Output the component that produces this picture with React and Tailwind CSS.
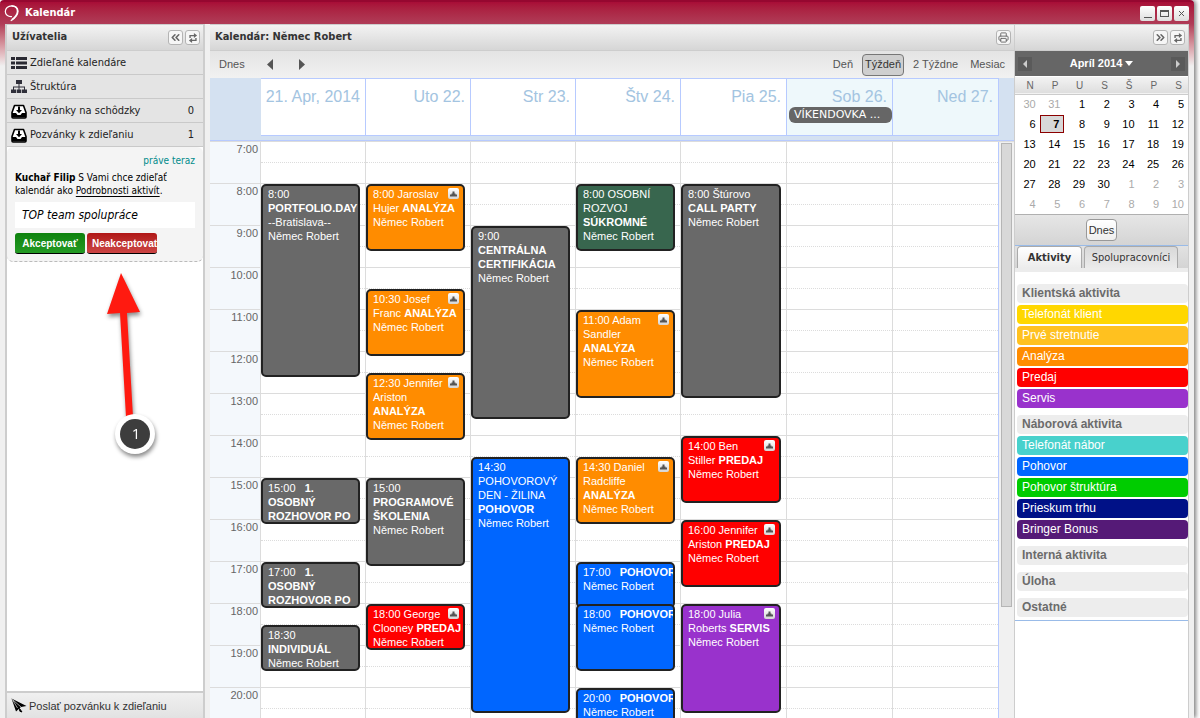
import { ChevronsLeft, ChevronsRight, Printer } from 'lucide-react'

const ARIAL = "font-['Liberation_Sans',Arial,sans-serif]"
const TAHOMA = "font-['DejaVu_Sans_Condensed',Tahoma,sans-serif]"
const DAY_COLUMNS = 'grid-cols-[105fr_105fr_105fr_105fr_106fr_106fr_106fr]'
const FIRST_HOUR = 7
const HOURS = Array.from({ length: 14 }, (_, i) => FIRST_HOUR + i)

const COLORS = {
  gray: 'bg-[#696969]',
  orange: 'bg-[#ff8c00]',
  green: 'bg-[#38664e]',
  blue: 'bg-[#0066ff]',
  red: 'bg-[#ff0000]',
  purple: 'bg-[#9932cc]',
}

// text after * is bold
const DAYS = [
  {
    label: '21. Apr, 2014',
    events: [
      { start: 8, hours: 4.5, color: 'gray', lines: ['8:00', '*PORTFOLIO.DAY', '--Bratislava--', 'Němec Robert'] },
      { start: 15, hours: 1, color: 'gray', lines: ['15:00 \u00a0 *1.', '*OSOBNÝ', '*ROZHOVOR PO'] },
      { start: 17, hours: 1, color: 'gray', lines: ['17:00 \u00a0 *1.', '*OSOBNÝ', '*ROZHOVOR PO'] },
      { start: 18.5, hours: 1, color: 'gray', lines: ['18:30', '*INDIVIDUÁL', 'Němec Robert'] },
    ],
  },
  {
    label: 'Uto 22.',
    events: [
      { start: 8, hours: 1.5, color: 'orange', shared: true, lines: ['8:00 Jaroslav', 'Hujer *ANALÝZA', 'Němec Robert'] },
      { start: 10.5, hours: 1.5, color: 'orange', shared: true, lines: ['10:30 Josef', 'Franc *ANALÝZA', 'Němec Robert'] },
      { start: 12.5, hours: 1.5, color: 'orange', shared: true, lines: ['12:30 Jennifer', 'Ariston', '*ANALÝZA', 'Němec Robert'] },
      { start: 15, hours: 2, color: 'gray', lines: ['15:00', '*PROGRAMOVÉ', '*ŠKOLENIA', 'Němec Robert'] },
      { start: 18, hours: 1, color: 'red', shared: true, lines: ['18:00 George', 'Clooney *PREDAJ', 'Němec Robert'] },
    ],
  },
  {
    label: 'Str 23.',
    events: [
      { start: 9, hours: 4.5, color: 'gray', lines: ['9:00', '*CENTRÁLNA', '*CERTIFIKÁCIA', 'Němec Robert'] },
      { start: 14.5, hours: 6, color: 'blue', lines: ['14:30', 'POHOVOROVÝ', 'DEN - ŽILINA', '*POHOVOR', 'Němec Robert'] },
    ],
  },
  {
    label: 'Štv 24.',
    events: [
      { start: 8, hours: 1.5, color: 'green', lines: ['8:00 OSOBNÍ', 'ROZVOJ', '*SÚKROMNÉ', 'Němec Robert'] },
      { start: 11, hours: 2, color: 'orange', shared: true, lines: ['11:00 Adam', 'Sandler', '*ANALÝZA', 'Němec Robert'] },
      { start: 14.5, hours: 1.5, color: 'orange', shared: true, lines: ['14:30 Daniel', 'Radcliffe', '*ANALÝZA', 'Němec Robert'] },
      { start: 17, hours: 1, color: 'blue', lines: ['17:00 \u00a0 *POHOVOR', 'Němec Robert'] },
      { start: 18, hours: 1.5, color: 'blue', lines: ['18:00 \u00a0 *POHOVOR', 'Němec Robert'] },
      { start: 20, hours: 1, color: 'blue', lines: ['20:00 \u00a0 *POHOVOR', 'Němec Robert'] },
    ],
  },
  {
    label: 'Pia 25.',
    events: [
      { start: 8, hours: 5, color: 'gray', lines: ['8:00 Štúrovo', '*CALL PARTY', 'Němec Robert'] },
      { start: 14, hours: 1.5, color: 'red', shared: true, lines: ['14:00 Ben', 'Stiller *PREDAJ', 'Němec Robert'] },
      { start: 16, hours: 1.5, color: 'red', shared: true, lines: ['16:00 Jennifer', 'Ariston *PREDAJ', 'Němec Robert'] },
      { start: 18, hours: 2.5, color: 'purple', shared: true, lines: ['18:00 Julia', 'Roberts *SERVIS', 'Němec Robert'] },
    ],
  },
  { label: 'Sob 26.', weekend: true, allDay: 'VÍKENDOVKA ...', events: [] },
  { label: 'Ned 27.', weekend: true, events: [] },
]

const WEEKS = [
  [30, 31, 1, 2, 3, 4, 5],
  [6, 7, 8, 9, 10, 11, 12],
  [13, 14, 15, 16, 17, 18, 19],
  [20, 21, 22, 23, 24, 25, 26],
  [27, 28, 29, 30, 1, 2, 3],
  [4, 5, 6, 7, 8, 9, 10],
]

const ACTIVITIES = [
  {
    name: 'Klientská aktivita',
    items: [
      ['Telefonát klient', 'bg-[#ffd700]'],
      ['Prvé stretnutie', 'bg-[#ffc11f]'],
      ['Analýza', 'bg-[#ff8c00]'],
      ['Predaj', 'bg-[#ff0000]'],
      ['Servis', 'bg-[#9932cc]'],
    ],
  },
  {
    name: 'Náborová aktivita',
    items: [
      ['Telefonát nábor', 'bg-[#48d1cc]'],
      ['Pohovor', 'bg-[#0066ff]'],
      ['Pohovor štruktúra', 'bg-[#00cc00]'],
      ['Prieskum trhu', 'bg-[#001187]'],
      ['Bringer Bonus', 'bg-[#551a77]'],
    ],
  },
  { name: 'Interná aktivita', items: [] },
  { name: 'Úloha', items: [] },
  { name: 'Ostatné', items: [] },
]

function LogoIcon() {
  return (
    <svg width="16" height="18" viewBox="0 0 16 18" fill="none" stroke="#fff" strokeLinecap="round">
      <path d="M7.5 12.6C3.8 12.8 1.3 10.6 1.3 7.6C1.3 4.3 4 1.8 7.8 1.8C11.5 1.8 14 4 14 7.2C14 11 10.8 14.2 7.2 16.6" strokeWidth="1.2" />
      <path d="M8 1.9C11.6 2 13.6 4.2 13.5 7.2C13.4 10.2 11 13.2 8.3 15.4" strokeWidth="1.5" />
    </svg>
  )
}

function ListIcon() {
  return (
    <svg width="16" height="14" viewBox="0 0 16 14" fill="#2a2a33">
      <path d="M0 1h4v3H0zM5 1h11v3H5zM0 5.5h4v3H0zM5 5.5h11v3H5zM0 10h4v3H0zM5 10h11v3H5z" />
    </svg>
  )
}

function TreeIcon() {
  return (
    <svg width="16" height="14" viewBox="0 0 16 14" fill="#2f2f3a">
      <path d="M5 0h6v4H5zM7.5 4h1v3h-1zM2 6.5h12v1H2zM2 7h1v3H2zM7.5 7h1v3h-1zM13 7h1v3h-1zM0 9.5h5V13H0zM5.7 9.5h4.6V13H5.7zM11 9.5h5V13h-5z" />
    </svg>
  )
}

function InboxIcon() {
  return (
    <svg width="16" height="15" viewBox="0 0 16 15">
      <path d="M3.5 1.5h9L15 8.5V13a1 1 0 0 1-1 1H2a1 1 0 0 1-1-1V8.5z" fill="#fff" stroke="#000" strokeWidth="1.6" strokeLinejoin="round" />
      <path d="M1 9h4l1.5 2h3L11 9h4v4.5H1z" fill="#000" />
      <path d="M7 2.5h2V6h2L8 9.2 5 6h2z" fill="#000" />
    </svg>
  )
}

function SendIcon() {
  return (
    <svg width="16" height="16" viewBox="0 0 16 16">
      <path d="M0.5 0.5L15.5 8L10 9L5 13.5z" fill="#000" />
      <path d="M2 2L10 9M1 1L6.5 10" stroke="#ddd" strokeWidth="0.7" />
      <path d="M8.5 10.5l2.5 3.5-2.2-.8z" fill="#000" stroke="#000" />
    </svg>
  )
}

function RefreshIcon() {
  return (
    <svg width="10" height="10" viewBox="0 0 11 11" fill="#666">
      <path d="M6.5 0L10 2.8L6.5 5.5V3.6H3V5.5H1.5V2.2H6.5zM4.5 11L1 8.2L4.5 5.5V7.4H8V5.5H9.5V8.8H4.5z" />
    </svg>
  )
}

function Triangle({ dir, className }) {
  const d = { left: 'M6 0v11L0 5.5z', right: 'M0 0v11l6-5.5z', down: 'M0 0h8L4 5z' }[dir]
  return (
    <svg width={dir === 'down' ? 8 : 6} height={dir === 'down' ? 5 : 11} className={className}>
      <path d={d} fill="currentColor" />
    </svg>
  )
}

function ToolButton({ label, children }) {
  return (
    <button
      aria-label={label}
      className="flex size-[15px] items-center justify-center rounded-[3px] border border-[#b4b4b4] bg-[#f6f6f6] text-[#666]"
    >
      {children}
    </button>
  )
}

function PanelHeader({ title, children }) {
  return (
    <div className="flex h-[27px] shrink-0 items-center justify-between border-y border-[#cdcdcd] bg-linear-to-b from-[#f3f3f3] to-[#d6d6d6] pl-[5px] pr-[3px]">
      <h2 className={`${TAHOMA} text-[11px] font-bold text-[#333]`}>{title}</h2>
      <div className="flex gap-[2px]">{children}</div>
    </div>
  )
}

function TitleBar() {
  return (
    <header className="flex h-6 shrink-0 items-center justify-between rounded-t border-t-2 border-[#960730] bg-linear-to-b from-[#a80c37] to-[#b03c58] pl-1 pr-[5px]">
      <div className="flex items-center gap-[5px]">
        <LogoIcon />
        <h1 className={`${TAHOMA} text-[11px] font-bold text-white`}>Kalendár</h1>
      </div>
      <div className="flex gap-[2px]">
        <button aria-label="Minimalizovať" className="flex size-[15px] items-end justify-center rounded-xs bg-linear-to-b from-white to-[#dedede] pb-[3px]">
          <span className="h-px w-2 bg-[#555]" />
        </button>
        <button aria-label="Maximalizovať" className="flex size-[15px] items-center justify-center rounded-xs bg-linear-to-b from-white to-[#dedede]">
          <span className="h-[7px] w-[9px] border border-t-2 border-[#555]" />
        </button>
        <button aria-label="Zavrieť" className="flex size-[15px] items-center justify-center rounded-xs bg-linear-to-b from-white to-[#dedede]">
          <svg width="7" height="7" stroke="#555">
            <path d="M1 1l5 5M6 1l-5 5" />
          </svg>
        </button>
      </div>
    </header>
  )
}

function MenuRow({ icon, label, count }) {
  return (
    <button className={`${TAHOMA} flex h-6 w-full items-center gap-[3px] border-b border-[#c9c9c9] bg-[#e4e4e4] pl-1 pr-[9px] pt-px text-[11px] text-[#222]`}>
      {icon}
      <span>{label}</span>
      <span className="ml-auto">{count}</span>
    </button>
  )
}

function Sidebar() {
  return (
    <aside className="flex w-[200px] shrink-0 flex-col border-x-2 border-[#cdcdcd] bg-white">
      <PanelHeader title="Užívatelia">
        <ToolButton label="Zbaliť"><ChevronsLeft size={13} strokeWidth={3} /></ToolButton>
        <ToolButton label="Obnoviť"><RefreshIcon /></ToolButton>
      </PanelHeader>
      <MenuRow icon={<ListIcon />} label="Zdieľané kalendáre" />
      <MenuRow icon={<TreeIcon />} label="Štruktúra" />
      <MenuRow icon={<InboxIcon />} label="Pozvánky na schôdzky" count="0" />
      <MenuRow icon={<InboxIcon />} label="Pozvánky k zdieľaniu" count="1" />
      <div className={`${TAHOMA} rounded-md border-b border-dashed border-[#bbb] bg-[#f4f4f4] px-2 pb-[7px] pt-[7px] text-[10px] text-black`}>
        <div className="text-right leading-[14px] text-[#008b8b]">práve teraz</div>
        <p className="mt-[3px] whitespace-nowrap leading-[13px]">
          <b>Kuchař Filip</b> S Vami chce zdieľať
          <br />
          kalendár ako <a href="#detail" className="underline underline-offset-2">Podrobnosti aktivít</a>.
        </p>
        <div className="mt-[5px] bg-white px-[7px] text-[12px] italic leading-[26px]">TOP team spolupráce</div>
        <div className={`${ARIAL} mt-[5px] flex gap-[2px] font-bold text-white`}>
          <button className="h-[21px] w-[70px] rounded-[3px] border-b border-black bg-linear-to-b from-[#0d820d] to-[#239a23]">Akceptovať</button>
          <button className="h-[21px] w-[70px] overflow-hidden whitespace-nowrap rounded-[3px] border-b border-black bg-linear-to-b from-[#b01616] to-[#cc4444] pl-[5px] text-left">Neakceptovať</button>
        </div>
      </div>
      <button className={`${ARIAL} mt-auto flex h-[27px] items-center gap-[2px] border-t-2 border-[#cdcdcd] bg-linear-to-b from-[#f0f0f0] to-[#e2e2e2] pl-1 pt-px text-[11px] text-[#333]`}>
        <SendIcon />
        Poslať pozvánku k zdieľaniu
      </button>
    </aside>
  )
}

function EventLine({ text }) {
  const [plain, bold] = text.split('*')
  return (
    <div>
      {plain}
      {bold && <b>{bold}</b>}
    </div>
  )
}

function Event({ event }) {
  const row = (event.start - FIRST_HOUR) * 2 + 1
  return (
    <div
      className={`${COLORS[event.color]} relative col-start-1 -mb-1 mr-[5px] overflow-hidden whitespace-nowrap rounded-[5px] border-2 border-[#222] px-[5px] pt-px text-[11px] leading-[14px] text-white`}
      style={{ gridRow: `${row} / span ${event.hours * 2}` }}
    >
      {event.lines.map((line, i) => <EventLine key={i} text={line} />)}
      {event.shared && (
        <span className="absolute right-1 top-[2px] flex size-[11px] items-center justify-center rounded-xs bg-linear-to-b from-white to-[#d5d5d5]">
          <svg width="7" height="6" viewBox="0 0 7 6" fill="#555">
            <path d="M2.5 0.5h2v2h1v1H7v2H0v-2h1.5v-1h1z" />
          </svg>
        </span>
      )}
    </div>
  )
}

function Calendar() {
  return (
    <main className={`${ARIAL} flex min-w-0 flex-1 flex-col bg-white`}>
      <PanelHeader title="Kalendár: Němec Robert">
        <ToolButton label="Tlačiť"><Printer size={11} /></ToolButton>
      </PanelHeader>
      <div className="flex h-[27px] shrink-0 items-center bg-linear-to-b from-[#e4e4e4] to-[#f1f1f1] pl-[9px] pr-[9px] text-[11px] text-[#555]">
        <button>Dnes</button>
        <button aria-label="Predchádzajúci" className="ml-[22px]"><Triangle dir="left" className="text-[#555]" /></button>
        <button aria-label="Nasledujúci" className="ml-[26px]"><Triangle dir="right" className="text-[#555]" /></button>
        <div className="ml-auto flex items-center gap-[9px]">
          <button>Deň</button>
          <button className="h-[22px] rounded border border-[#777] bg-[#cfcfcf] px-[2px] text-[#333]">Týždeň</button>
          <button>2 Týždne</button>
          <button className="ml-[3px]">Mesiac</button>
        </div>
      </div>

      <div className="flex shrink-0 border-b border-[#b7caff] bg-[#d4e1f1] pb-1 pl-[51px] pr-[15px]">
        <div className={`grid h-[58px] flex-1 border-y border-[#b7caff] ${DAY_COLUMNS}`}>
          {DAYS.map((day) => (
            <div key={day.label} className={`min-w-0 border-r border-[#b7caff] pt-2 ${day.weekend ? 'bg-[#eef8fb]' : 'bg-white'}`}>
              <div className="whitespace-nowrap pr-[5px] text-right text-[16px] leading-5 text-[#a3c4e1]">{day.label}</div>
              {day.allDay && (
                <div className="ml-[2px] rounded-md bg-[#666] px-[5px] font-['DejaVu_Sans',Verdana,sans-serif] text-[11px] leading-4 text-white">{day.allDay}</div>
              )}
            </div>
          ))}
        </div>
      </div>

      <div className="flex min-h-0 flex-1 overflow-hidden border-t border-[#dcdcdc]">
        <div className="w-[51px] shrink-0 border-r border-[#dcdcdc] bg-[#f4f8fc]">
          {HOURS.map((h) => (
            <div key={h} className="h-[42px] border-b border-[#dcdcdc] pr-[2px] text-right text-[11px] leading-[14px] text-[#666]">{h}:00</div>
          ))}
        </div>
        <div className={`grid flex-1 ${DAY_COLUMNS}`}>
          {DAYS.map((day) => (
            <div key={day.label} className="grid min-w-0 auto-rows-[21px] grid-cols-1 content-start border-r border-[#dcdcdc] last:border-[#b7caff]">
              {HOURS.flatMap((h) => [h, h + 0.5]).map((slot) => (
                <div
                  key={slot}
                  className={`col-start-1 border-b border-[#dcdcdc] ${slot % 1 ? '' : 'border-dotted'}`}
                  style={{ gridRow: (slot - FIRST_HOUR) * 2 + 1 }}
                />
              ))}
              {day.events.map((e) => <Event key={e.start} event={e} />)}
            </div>
          ))}
        </div>
        <div className="w-[15px] shrink-0 bg-[#f1f1f1] px-[2px] pt-px">
          <div className="h-[464px] border border-[#b5b5b5] bg-[#d8d8d8]" />
        </div>
      </div>
    </main>
  )
}

function DatePicker() {
  return (
    <div>
      <div className="flex h-[26px] items-center justify-between border-b border-white bg-[#666] px-[3px] text-[#ccc]">
        <button aria-label="Predchádzajúci mesiac" className="flex size-[14px] items-center justify-center bg-[#5a5a5a]">
          <svg width="4" height="8"><path d="M4 0v8L0 4z" fill="currentColor" /></svg>
        </button>
        <button className="flex items-center gap-[3px] text-[11px] font-bold text-white">
          Apríl 2014 <Triangle dir="down" />
        </button>
        <button aria-label="Nasledujúci mesiac" className="flex size-[14px] items-center justify-center bg-[#5a5a5a]">
          <svg width="4" height="8"><path d="M0 0v8l4-4z" fill="currentColor" /></svg>
        </button>
      </div>
      <table className="w-full table-fixed text-right text-[11px]">
        <thead>
          <tr className="h-[17px] border-b border-[#ccc] bg-linear-to-b from-[#f3f3f3] to-[#dedede] text-[10px] text-[#666]">
            {['N', 'P', 'U', 'S', 'Š', 'P', 'S'].map((d, i) => <th key={i} className="pr-[6px] text-right font-normal">{d}</th>)}
          </tr>
        </thead>
        <tbody>
          {WEEKS.map((week, w) => (
            <tr key={w} className="h-5">
              {week.map((d, i) => {
                const other = (w === 0 && d > 20) || (w > 3 && d < 15)
                const selected = w === 1 && d === 7
                return (
                  <td key={i} className={`p-0 ${other ? 'text-[#aaa]' : 'text-black'}`}>
                    <button className={`h-[18px] w-full pr-1 text-right ${selected ? 'border border-[#8b0000] bg-[#d8d8d8] font-bold' : ''}`}>{d}</button>
                  </td>
                )
              })}
            </tr>
          ))}
        </tbody>
      </table>
      <div className="flex h-8 items-center justify-center border-b border-t border-b-[#99bbe8] border-t-[#b0b0b0] bg-linear-to-b from-[#e6e6e6] to-[#d4d4d4]">
        <button className="h-[22px] rounded border border-[#999] bg-linear-to-b from-white to-[#eee] px-[2px] text-[11px] text-[#333]">Dnes</button>
      </div>
    </div>
  )
}

function ActivityPanel() {
  return (
    <aside className={`${ARIAL} flex w-[175px] shrink-0 flex-col overflow-hidden border-x border-[#cdcdcd] bg-white`}>
      <PanelHeader>
        <ToolButton label="Zbaliť"><ChevronsRight size={13} strokeWidth={3} /></ToolButton>
        <ToolButton label="Obnoviť"><RefreshIcon /></ToolButton>
      </PanelHeader>
      <DatePicker />
      <div className={`${TAHOMA} flex h-[26px] items-end gap-[2px] border-b-4 border-[#ececec] bg-linear-to-b from-[#e2e2e2] to-[#d4d4d4] px-[2px] text-[11px] text-[#333]`}>
        <button className="h-[22px] w-[65px] rounded-t border border-b-0 border-[#aaa] bg-linear-to-b from-white to-[#ececec] pt-px font-bold">Aktivity</button>
        <button className="h-[22px] w-[94px] rounded-t border border-b-0 border-[#aaa] bg-linear-to-b from-[#d8d8d8] to-[#ebebeb] pt-px">Spolupracovníci</button>
      </div>
      <div className="flex flex-col gap-[7px] border-b border-[#99bbe8] pb-[3px] pl-[2px] pt-3 text-[12px] leading-[19px]">
        {ACTIVITIES.map((group) => (
          <section key={group.name} className="flex flex-col gap-[2px]">
            <h3 className="rounded bg-[#ededed] pl-[5px] font-bold text-[#6b6b6b]">{group.name}</h3>
            {group.items.map(([name, color]) => (
              <div key={name} className={`${color} rounded pl-[5px] text-white`}>{name}</div>
            ))}
          </section>
        ))}
      </div>
    </aside>
  )
}

function Annotation() {
  return (
    <svg width="70" height="200" className="pointer-events-none absolute left-[100px] top-[265px] drop-shadow-[1px_3px_2px_rgba(0,0,0,0.45)]">
      <path d="M21 8L40 47L27 48L33 152L26 152L20 48L7 49z" fill="#ff1a10" />
      <circle cx="35" cy="169" r="20" fill="#fff" />
      <circle cx="35" cy="169" r="15" fill="#3d3d3d" />
      <text x="36" y="174" textAnchor="middle" fill="#fff" fontSize="15" fontFamily="Open Sans, sans-serif">1</text>
    </svg>
  )
}

export default function App() {
  return (
    <div className="relative h-screen overflow-hidden bg-white pr-[6px]">
      <div className="flex h-full flex-col rounded-t shadow-[2px_0_4px_rgba(0,0,0,0.5)]">
        <TitleBar />
        <div className="flex min-h-0 flex-1 bg-[#f0f0f0]">
          <div className="w-[5px] shrink-0 bg-linear-to-b from-[#b03c58] to-[#f0f0f0] to-[42px]" />
          <div className="flex min-w-0 flex-1">
            <Sidebar />
            <div className="w-[5px] shrink-0" />
            <Calendar />
            <ActivityPanel />
          </div>
          <div className="w-[5px] shrink-0 bg-linear-to-b from-[#b03c58] to-[#f0f0f0] to-[42px]" />
        </div>
      </div>
      <Annotation />
    </div>
  )
}
